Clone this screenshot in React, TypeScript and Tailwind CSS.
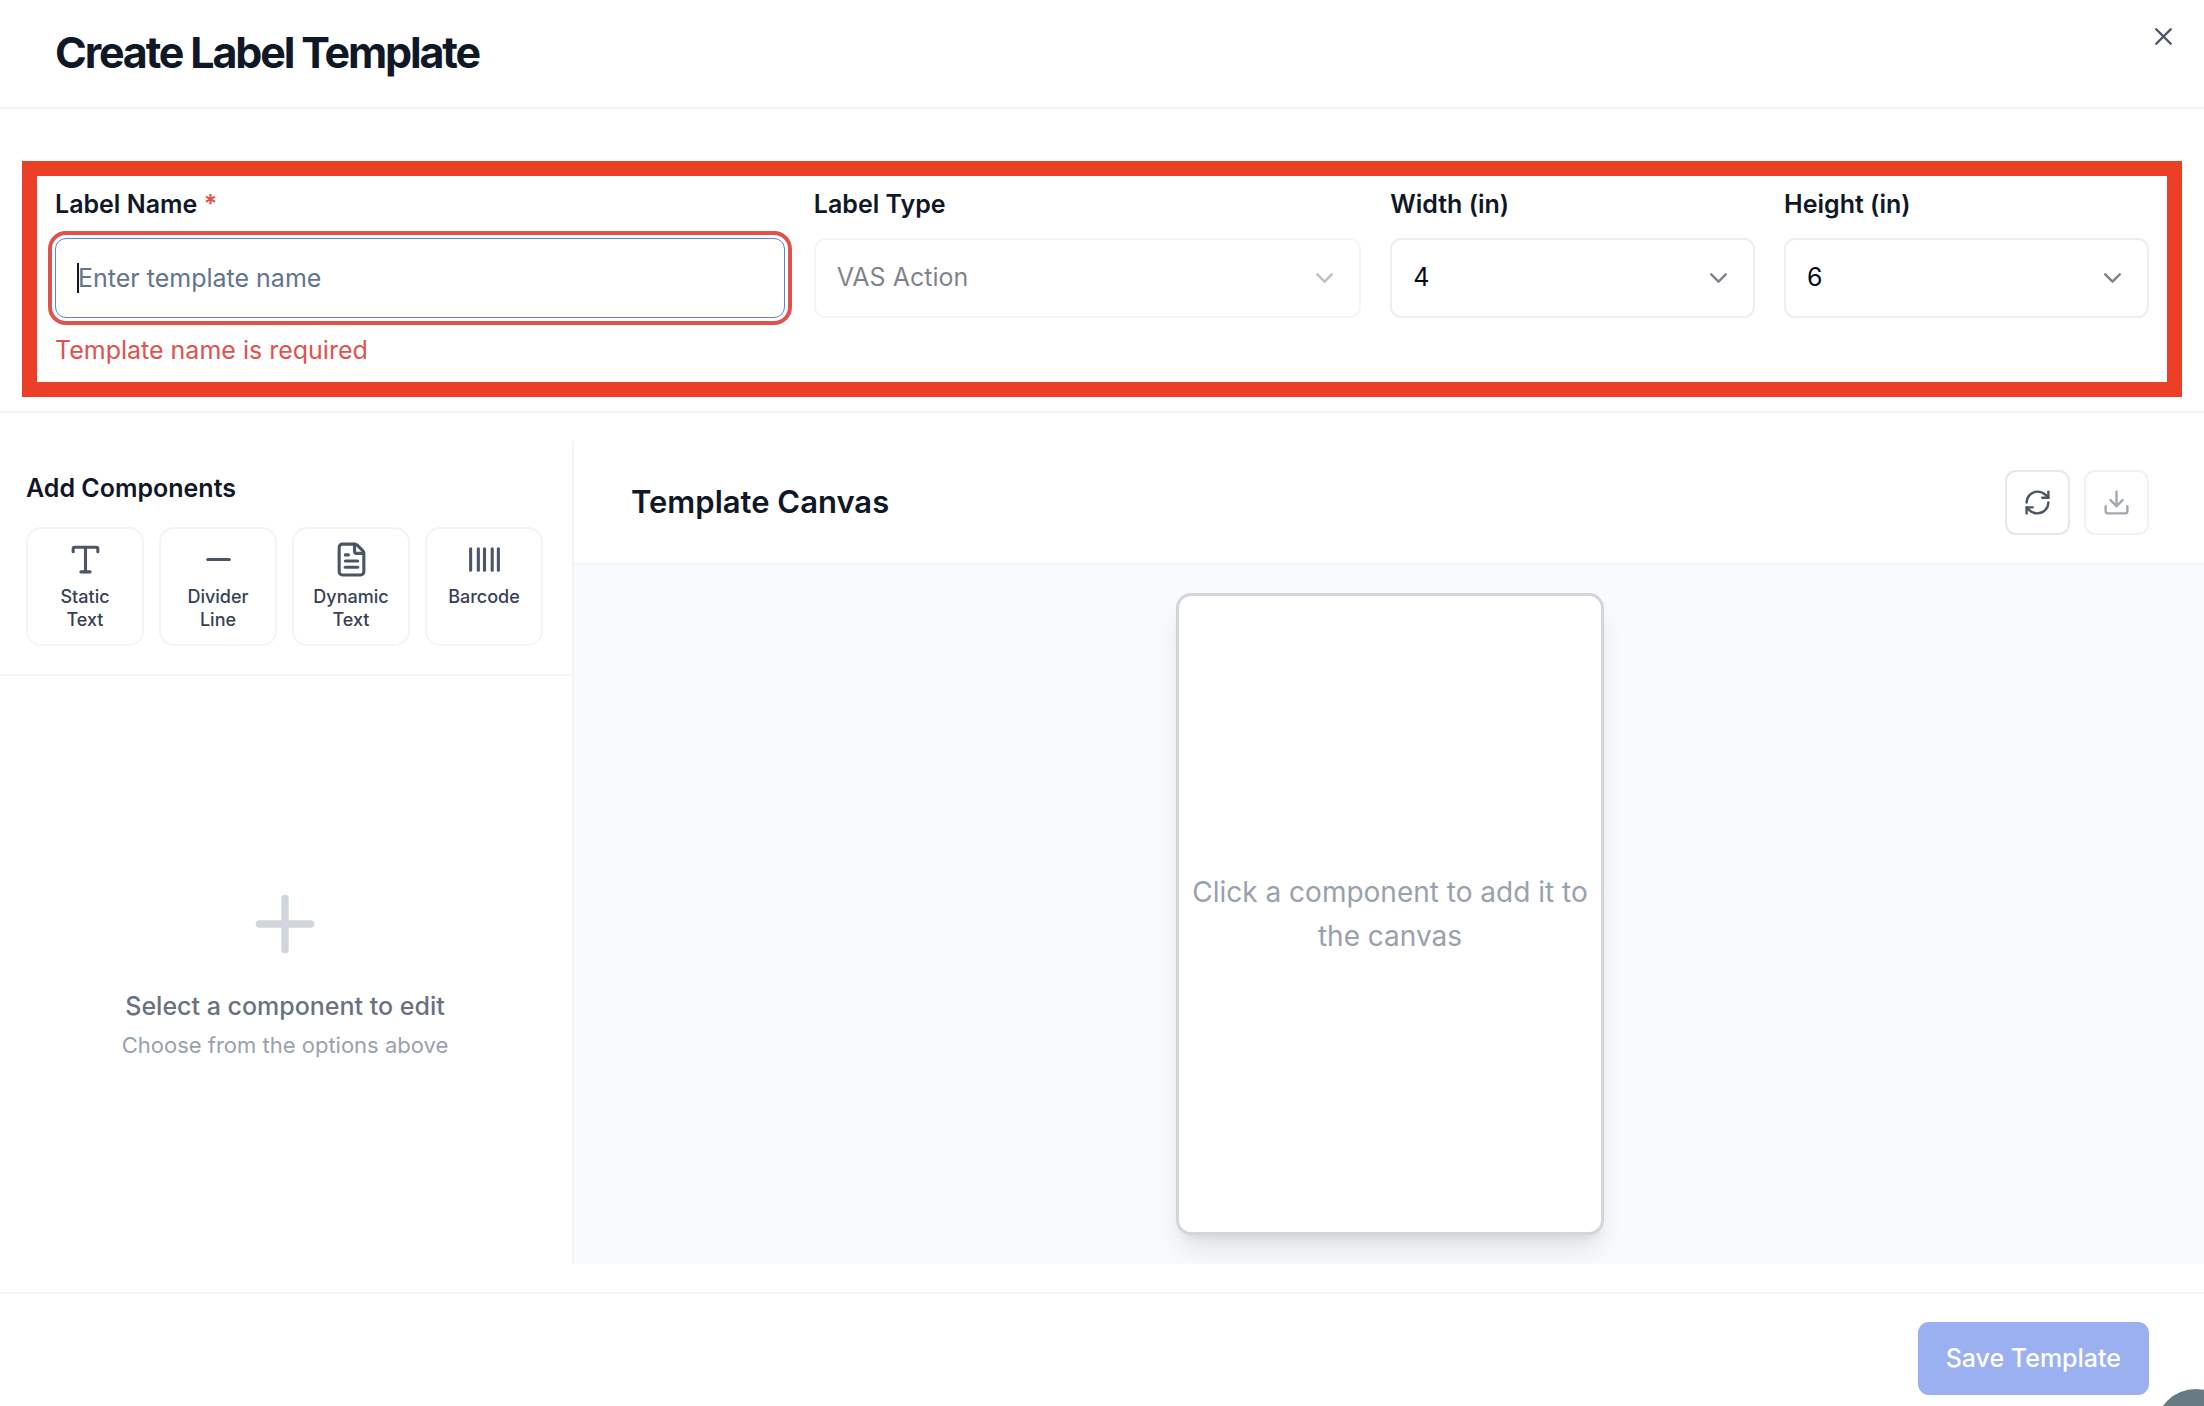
import type { ReactNode } from "react";
import {
  Barcode,
  ChevronDown,
  Download,
  FileText,
  Minus,
  Plus,
  RefreshCw,
  Type,
  X,
  type LucideIcon,
} from "lucide-react";

const components: { label: string; icon: LucideIcon }[] = [
  { label: "Static Text", icon: Type },
  { label: "Divider Line", icon: Minus },
  { label: "Dynamic Text", icon: FileText },
  { label: "Barcode", icon: Barcode },
];

function FieldLabel({ id, children }: { id: string; children: ReactNode }) {
  return (
    <label htmlFor={id} className="mb-[21px] block text-[25px] leading-[25px] font-semibold text-gray-900">
      {children}
    </label>
  );
}

function SelectField({
  id,
  label,
  options,
  value,
  disabled,
}: {
  id: string;
  label: string;
  options: string[];
  value: string;
  disabled?: boolean;
}) {
  return (
    <div>
      <FieldLabel id={id}>{label}</FieldLabel>
      <div className={disabled ? "relative opacity-50" : "relative"}>
        <select
          id={id}
          defaultValue={value}
          disabled={disabled}
          className="h-20 w-full appearance-none rounded-[11px] border-2 border-[#eceef5] bg-white px-[21px] text-[25px] text-[#020817] opacity-100"
        >
          {options.map((option) => (
            <option key={option}>{option}</option>
          ))}
        </select>
        <ChevronDown
          size={29}
          className="pointer-events-none absolute top-1/2 right-[22px] -translate-y-1/2 text-[#020817] opacity-50"
        />
      </div>
    </div>
  );
}

export default function App() {
  return (
    <div className="flex min-h-screen flex-col overflow-hidden bg-white font-['Inter',sans-serif] text-gray-900">
      <header className="flex items-start justify-between border-b-2 border-gray-100 pt-5 pr-[26px] pb-[23px] pl-[55px]">
        <h1 className="text-[43px] leading-[64px] font-bold tracking-tighter">Create Label Template</h1>
        <button type="button" aria-label="Close" className="mt-0.5 text-gray-600">
          <X size={29} />
        </button>
      </header>

      <section className="border-b-2 border-gray-100 px-[22px] pt-[52px] pb-[14px]">
        <div className="grid grid-cols-[4fr_3fr_2fr_2fr] gap-[29px] border-[15px] border-[#eb4027] px-[18px] pt-4 pb-[14px]">
          <div>
            <FieldLabel id="label-name">
              Label Name <span className="text-[#e0524d]">*</span>
            </FieldLabel>
            <div className="relative">
              <input
                id="label-name"
                type="text"
                placeholder="Enter template name"
                aria-invalid="true"
                aria-describedby="label-name-error"
                className="block h-20 w-full rounded-[11px] border border-[#5b80ea] bg-white px-[22px] text-[25px] outline-4 outline-offset-3 outline-[#e0524d] placeholder:text-slate-500"
              />
              <span className="absolute top-[25px] left-[22px] h-[30px] w-0.5 bg-gray-900" />
            </div>
            <p id="label-name-error" className="mt-[14px] text-[25px] leading-[36px] text-[#e0524d]">
              Template name is required
            </p>
          </div>
          <SelectField id="label-type" label="Label Type" options={["VAS Action"]} value="VAS Action" disabled />
          <SelectField id="label-width" label="Width (in)" options={["2", "3", "4", "6"]} value="4" />
          <SelectField id="label-height" label="Height (in)" options={["2", "4", "6", "8"]} value="6" />
        </div>
      </section>

      <main className="flex flex-1 py-7">
        <aside className="flex w-[574px] shrink-0 flex-col border-r-2 border-gray-100">
          <div className="border-b-2 border-gray-100 pt-[29px] pr-[29px] pb-7 pl-[26px]">
            <h2 className="mb-[21px] text-[25px] leading-[36px] font-semibold">Add Components</h2>
            <div className="grid grid-cols-4 gap-[15px]">
              {components.map(({ label, icon: Icon }) => (
                <button
                  key={label}
                  type="button"
                  className="flex h-[119px] flex-col items-center gap-[7px] rounded-[15px] border-2 border-gray-100 px-3 pt-3 text-[18px] leading-[23px] font-medium text-gray-700"
                >
                  <Icon size={37} className="shrink-0 text-gray-600" />
                  {label}
                </button>
              ))}
            </div>
          </div>
          <div className="flex flex-1 flex-col items-center justify-center pr-0.5 text-center">
            <Plus size={88} className="mb-5 text-gray-300" />
            <p className="text-[25px] leading-[36px] font-medium text-gray-500">Select a component to edit</p>
            <p className="mt-[7px] text-[22px] leading-[29px] text-gray-400">Choose from the options above</p>
          </div>
        </aside>

        <section className="flex flex-1 flex-col">
          <div className="flex items-center justify-between border-b-2 border-gray-100 py-7 pr-[55px] pl-[57px]">
            <h2 className="text-[31px] leading-[66px] font-semibold">Template Canvas</h2>
            <div className="flex gap-[14px]">
              <button
                type="button"
                aria-label="Reset canvas"
                className="flex size-[65px] items-center justify-center rounded-[11px] border-2 border-gray-200 text-gray-600"
              >
                <RefreshCw size={29} />
              </button>
              <button
                type="button"
                aria-label="Download template"
                disabled
                className="flex size-[65px] items-center justify-center rounded-[11px] border-2 border-gray-200 text-gray-600 opacity-50"
              >
                <Download size={29} />
              </button>
            </div>
          </div>
          <div className="flex flex-1 items-start justify-center overflow-hidden bg-[#f9fafc] py-7 pl-0.5">
            <div className="flex h-[642px] w-[428px] items-center justify-center rounded-[15px] border-3 border-gray-300 bg-white shadow-[0_18px_27px_-5px_rgba(0,0,0,0.1),0_7px_11px_-7px_rgba(0,0,0,0.1)]">
              <p className="text-center text-[28px] leading-[44px] text-gray-400">
                Click a component to add it to the canvas
              </p>
            </div>
          </div>
        </section>
      </main>

      <footer className="flex justify-end border-t-2 border-gray-100 px-[55px] pt-7 pb-[11px]">
        <button
          type="button"
          disabled
          className="h-[73px] rounded-[11px] bg-[#9bb0f1] px-7 text-[25px] font-medium text-white"
        >
          Save Template
        </button>
      </footer>

      <button
        type="button"
        aria-label="Help"
        className="fixed -right-[33px] -bottom-[65px] size-[82px] rounded-full bg-[#687b84]"
      />
    </div>
  );
}
